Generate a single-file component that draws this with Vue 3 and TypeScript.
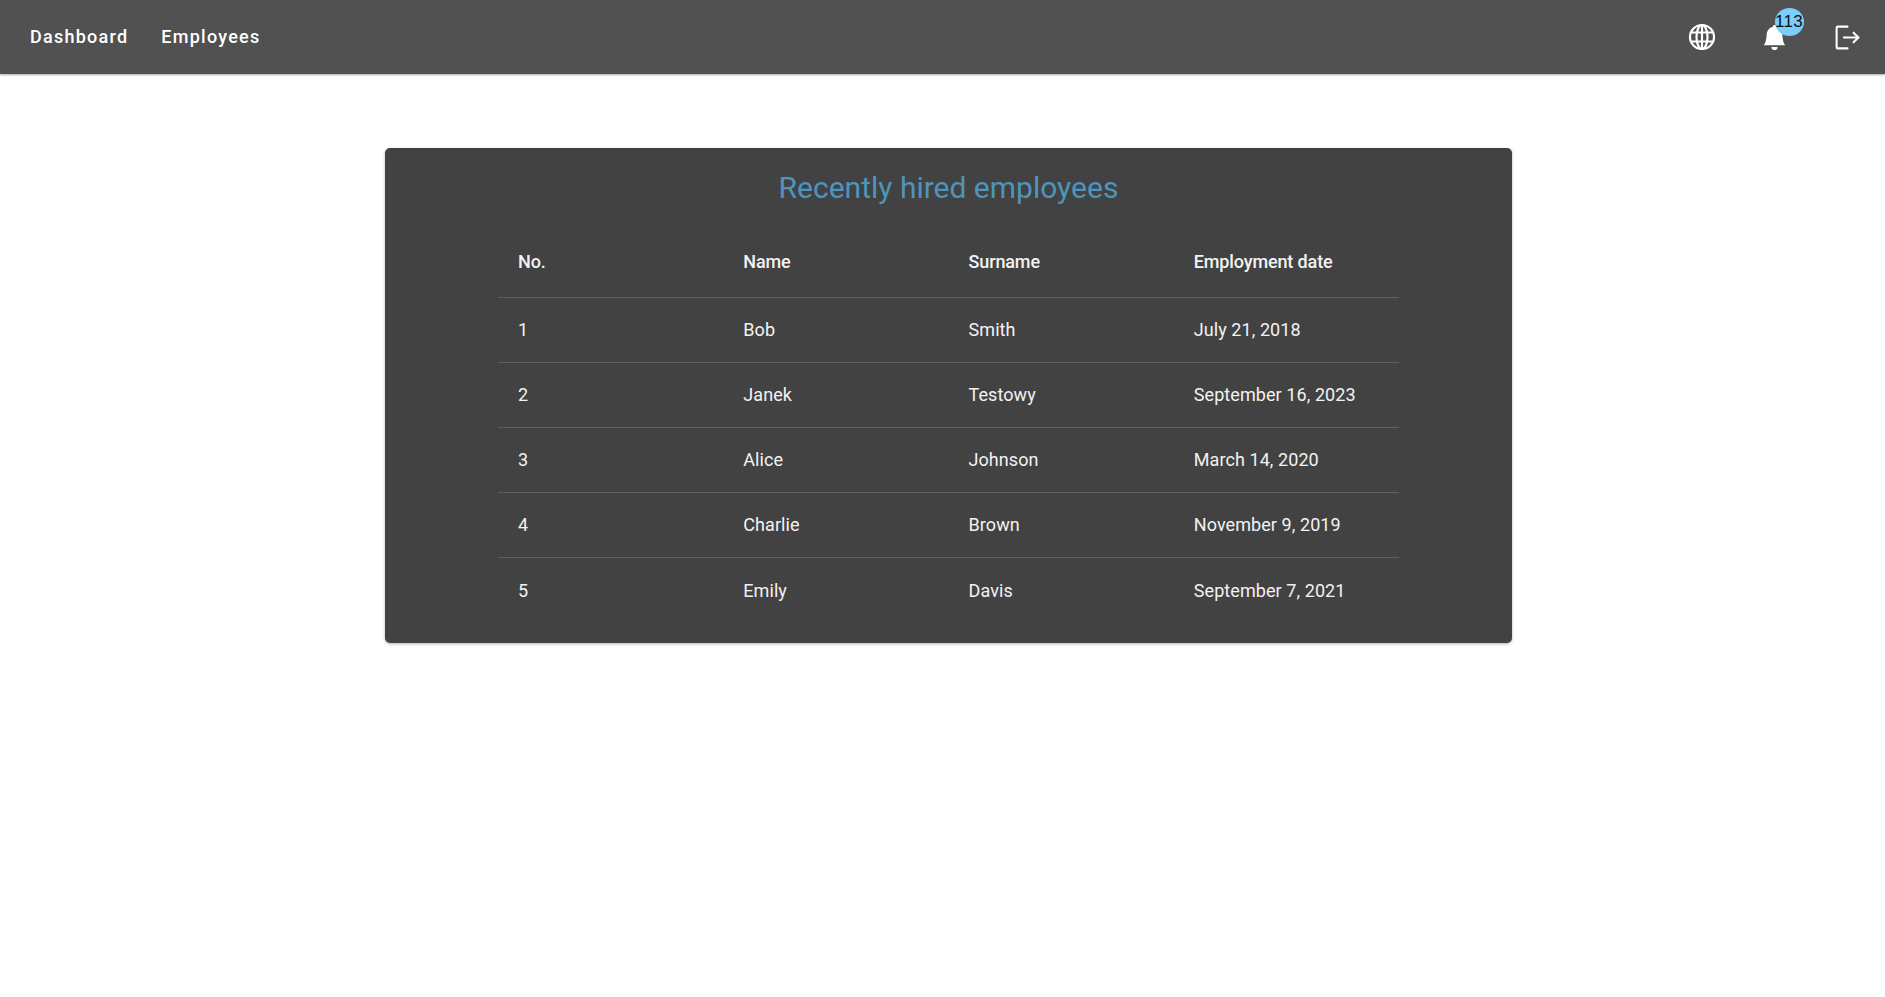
<script setup lang="ts">
interface Employee {
  no: number;
  name: string;
  surname: string;
  date: string;
}

const employees: Employee[] = [
  { no: 1, name: "Bob", surname: "Smith", date: "July 21, 2018" },
  { no: 2, name: "Janek", surname: "Testowy", date: "September 16, 2023" },
  { no: 3, name: "Alice", surname: "Johnson", date: "March 14, 2020" },
  { no: 4, name: "Charlie", surname: "Brown", date: "November 9, 2019" },
  { no: 5, name: "Emily", surname: "Davis", date: "September 7, 2021" },
];
</script>

<template>
  <div class="page">
    <header class="navbar">
      <nav class="links">
        <a class="link">Dashboard</a>
        <a class="link">Employees</a>
      </nav>
      <div class="actions">
        <button class="icon-btn" aria-label="Language">
          <svg width="28" height="28" viewBox="0 0 28 28" fill="none" stroke="#fff" stroke-width="2.2">
            <circle cx="14" cy="14" r="12" />
            <ellipse cx="14" cy="14" rx="5.5" ry="12" />
            <path d="M14 2v24M3.5 9.5h21M3.5 18.5h21" />
          </svg>
        </button>
        <button class="icon-btn" aria-label="Notifications">
          <svg width="25" height="25" viewBox="0 0 16 16" fill="#fff">
            <path d="M8 16a2 2 0 0 0 2-2H6a2 2 0 0 0 2 2m.995-14.901a1 1 0 1 0-1.99 0A5 5 0 0 0 3 6c0 1.098-.5 6-2 7h14c-1.5-1-2-5.902-2-7 0-2.42-1.72-4.44-4.005-4.901" />
          </svg>
          <span class="badge">113</span>
        </button>
        <button class="icon-btn" aria-label="Log out">
          <svg width="29" height="29" viewBox="0 0 24 24" fill="none" stroke="#fff" stroke-width="1.7" stroke-linecap="round" stroke-linejoin="round">
            <path d="M12 21H4a1 1 0 0 1-1-1V4a1 1 0 0 1 1-1h8" />
            <path d="M17 16l4-4-4-4" />
            <path d="M21 12H9" />
          </svg>
        </button>
      </div>
    </header>

    <main class="content">
      <section class="card">
        <h2 class="title">Recently hired employees</h2>
        <table class="table">
          <thead>
            <tr>
              <th>No.</th>
              <th>Name</th>
              <th>Surname</th>
              <th>Employment date</th>
            </tr>
          </thead>
          <tbody>
            <tr v-for="e in employees" :key="e.no">
              <td>{{ e.no }}</td>
              <td>{{ e.name }}</td>
              <td>{{ e.surname }}</td>
              <td>{{ e.date }}</td>
            </tr>
          </tbody>
        </table>
      </section>
    </main>
  </div>
</template>

<style scoped>
.page {
  min-height: 997px;
  background: #fff;
  font-family: Roboto, "Liberation Sans", sans-serif;
}

.navbar {
  display: flex;
  align-items: center;
  justify-content: space-between;
  height: 74px;
  padding: 0 18px 0 30px;
  background: #515151;
  box-shadow: 0 1px 2px rgba(0, 0, 0, 0.35);
}

.links {
  display: flex;
  gap: 33px;
  padding-bottom: 2px;
}

.link {
  color: #fff;
  font-size: 18px;
  font-weight: 500;
  letter-spacing: 1.25px;
}

.actions {
  display: flex;
  align-items: center;
  gap: 32.5px;
}

.icon-btn {
  position: relative;
  display: flex;
  align-items: center;
  justify-content: center;
  width: 40px;
  height: 40px;
  padding: 0;
  border: 0;
  background: none;
}

.badge {
  position: absolute;
  top: -9px;
  left: 20px;
  display: flex;
  align-items: center;
  justify-content: center;
  width: 29px;
  height: 28px;
  border-radius: 50%;
  background: #7bcdfb;
  color: #111;
  font-size: 17px;
  font-weight: 500;
  letter-spacing: 0.3px;
}

.content {
  display: flex;
  justify-content: center;
  padding: 74px 0 0 12px;
}

.card {
  box-sizing: border-box;
  width: 1127px;
  height: 495px;
  padding-top: 19px;
  border-radius: 5px;
  background: #424242;
  box-shadow: 0 1px 3px rgba(0, 0, 0, 0.3);
}

.title {
  margin: 0;
  color: #4f94bd;
  font-size: 30px;
  font-weight: 400;
  line-height: 42px;
  text-align: center;
}

.table {
  width: 901px;
  margin: 15px auto 0;
  border-collapse: collapse;
  table-layout: fixed;
  color: #f2f2f2;
  font-size: 18px;
}

th,
td {
  box-sizing: border-box;
  padding: 0 20px;
  text-align: left;
}

th {
  height: 73px;
  padding-top: 3px;
  font-weight: 500;
  letter-spacing: -0.13px;
  border-bottom: 1px solid #5f5f5f;
}

td {
  height: 65px;
  letter-spacing: 0.08px;
  border-bottom: 1px solid #5f5f5f;
}

tbody tr:last-child td {
  padding-top: 1px;
  border-bottom: 0;
}
</style>
